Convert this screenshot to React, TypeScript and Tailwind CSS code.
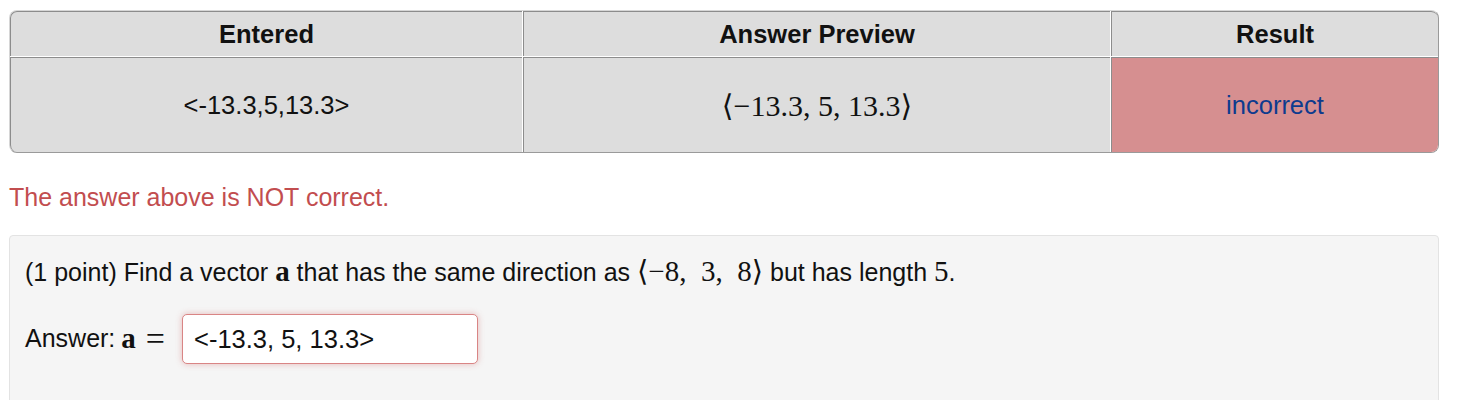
export default function App() {
  return (
    <div className="w-[1460px] h-[400px] overflow-hidden bg-white pl-[9px] pr-[21px] pt-[10px] font-['Liberation_Sans',Arial,sans-serif] text-[#111]">
      {/* ATTEMPT RESULTS */}
      <div className="rounded-[8px] border border-t-[#d6d6d6] border-l-[#d6d6d6] border-r-[#9a9a9a] border-b-[#9a9a9a] bg-white">
        <div className="grid grid-cols-[512px_587px_1fr] gap-[1px]">
          <div className="flex h-[45px] items-center justify-center rounded-tl-[7px] border-l border-t border-[#8c8c8c] bg-[#dddddd] text-[25.5px] font-bold">
            Entered
          </div>
          <div className="flex h-[45px] items-center justify-center border-l border-t border-[#8c8c8c] bg-[#dddddd] text-[25.5px] font-bold">
            Answer Preview
          </div>
          <div className="flex h-[45px] items-center justify-center rounded-tr-[7px] border-l border-t border-[#8c8c8c] bg-[#dddddd] text-[25.5px] font-bold">
            Result
          </div>
          <div className="flex h-[95px] items-center justify-center rounded-bl-[7px] border-l border-t border-[#8c8c8c] bg-[#dddddd] text-[25.5px]">
            &lt;-13.3,5,13.3&gt;
          </div>
          <div className="flex h-[95px] items-center justify-center border-l border-t border-[#8c8c8c] bg-[#dddddd] font-['Liberation_Serif','DejaVu_Serif',serif] text-[30px]">
            ⟨−13.3, 5, 13.3⟩
          </div>
          <div className="flex h-[95px] items-center justify-center rounded-br-[7px] border-l border-t border-[#8c8c8c] bg-[#d68f90] text-[25.5px] text-[#0d3b8e]">
            incorrect
          </div>
        </div>
      </div>

      {/* FEEDBACK */}
      <p className="mt-[30px] text-[25px] leading-[28px] text-[#c24d4f]">The answer above is NOT correct.</p>

      {/* PROBLEM */}
      <div className="mt-[24px] h-[200px] rounded-[4px] border border-[#e3e3e3] bg-[#f5f5f5] px-[15px] pt-[19px]">
        <p className="flex items-baseline text-[25px] leading-[32px] whitespace-pre">
          <span>(1 point) Find a vector </span>
          <span className="font-['Liberation_Serif',serif] text-[29px] font-bold">a</span>
          <span> that has the same direction as </span>
          <span className="font-['Liberation_Serif','DejaVu_Serif',serif] text-[29px]">⟨−8,  3,  8⟩</span>
          <span> but has length </span>
          <span className="font-['Liberation_Serif',serif] text-[29px]">5</span>
          <span>.</span>
        </p>
        <div className="mt-[26px] flex items-center">
          <span className="text-[25px]">Answer:</span>
          <span className="ml-[6px] font-['Liberation_Serif',serif] text-[29px] font-bold">a</span>
          <span className="ml-[10px] font-['Liberation_Serif',serif] text-[34px] leading-none">=</span>
          <div className="ml-[17px] flex h-[50px] w-[296px] items-center rounded-[5px] border border-[#d98585] bg-white px-[11px] text-[25.5px] shadow-[0_0_6px_rgba(210,110,110,0.45)]">
            &lt;-13.3, 5, 13.3&gt;
          </div>
        </div>
      </div>
    </div>
  );
}
